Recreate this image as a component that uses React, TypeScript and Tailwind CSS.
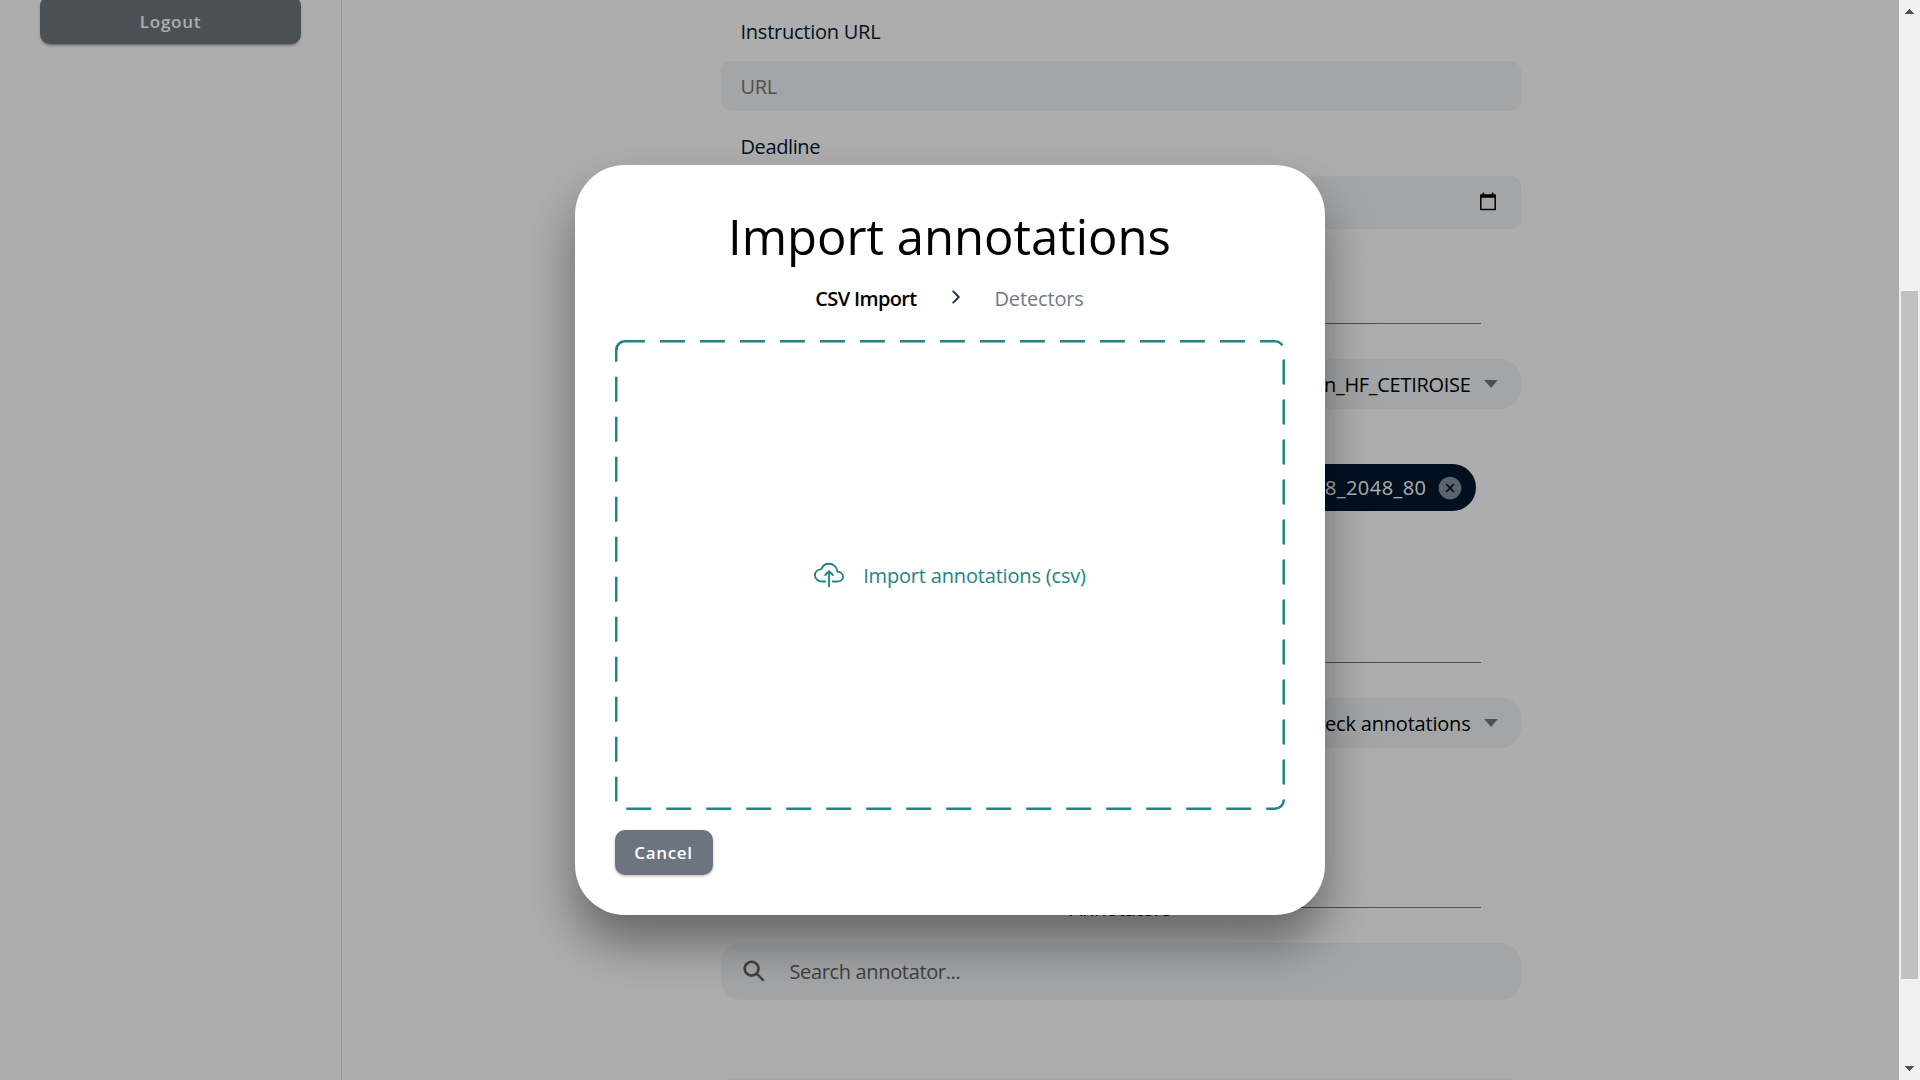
import React from 'react';
import {
  IoCaretDownSharp,
  IoChevronForwardOutline,
  IoCloseCircle,
  IoCloudUploadOutline,
  IoSearchSharp,
} from 'react-icons/io5';

function Divider({ title }: { title?: string }) {
  return (
    <div className="mx-10 flex h-[30px] items-center">
      <span className="h-px flex-1 bg-[#6c757d]" />
      {title && <span className="px-4 pt-[3px] text-[20px] leading-[30px] tracking-[-0.3px] text-black">{title}</span>}
      {title && <span className="h-px flex-1 bg-[#6c757d]" />}
    </div>
  );
}

function Select({ value, spacing }: { value: string; spacing: string }) {
  return (
    <div className="flex h-[50px] items-center justify-end rounded-[20px] bg-[#f1f4f7] pr-[21px]">
      <span className={`pt-0.5 text-[20px] leading-[30px] text-black ${spacing}`}>{value}</span>
      <IoCaretDownSharp className="ml-[11px] size-[18px] text-[#6b7789]" />
    </div>
  );
}

function CalendarIcon() {
  return (
    <svg className="-mt-0.5 h-[19px] w-4" viewBox="0 0 16 19" fill="none">
      <path d="M.8 3.2h14.4v14.2H.8z" stroke="black" strokeWidth="1.5" strokeLinejoin="round" />
      <path d="M.5 2.6h15v3.2H.5zM2.6.6h1.6v2.6H2.6zM11.8.6h1.6v2.6h-1.6z" fill="black" />
    </svg>
  );
}

function Sidebar() {
  return (
    <aside className="h-full w-[342px] shrink-0 border-r border-[#dadada] px-10">
      <button className="-mt-1 block h-12 w-full rounded-[10px] bg-[#6e767f] pt-1 text-[17px] font-semibold tracking-[0.75px] text-white shadow-[0_3px_2px_-2px_rgba(0,0,0,0.25),0_2px_3px_rgba(0,0,0,0.2)]">
        Logout
      </button>
    </aside>
  );
}

function CampaignForm() {
  return (
    <main className="flex flex-1 justify-center">
      <form className="w-[800px] text-[20px] text-[#001a35]">
        <label className="mt-[17px] block px-5 leading-[30px] tracking-[-0.25px]">Instruction URL</label>
        <div className="mt-[14px] flex h-[50px] items-center rounded-[10px] bg-[#f1f4f7] px-5 pt-0.5 leading-[30px] tracking-[-0.3px] text-[#757575]">
          URL
        </div>
        <label className="mt-[21px] block px-5 leading-[30px] tracking-[-0.4px]">Deadline</label>
        <div className="mt-[14px] flex h-[53px] items-center justify-end rounded-[10px] bg-[#f1f4f7] pr-[25px]">
          <CalendarIcon />
        </div>
        <div className="mt-[79px]">
          <Divider />
        </div>
        <div className="mt-[21px]">
          <Select value="Sample_campaign_HF_CETIROISE" spacing="tracking-[-0.3px]" />
        </div>
        <div className="mt-[55px] flex justify-end pr-[45px]">
          <div className="flex h-[47px] items-center rounded-full bg-[#001832] pl-5 pr-[12px] text-white">
            <span className="leading-[30px] tracking-[0.45px]">4096_2048_2048_80</span>
            <IoCloseCircle className="ml-[9px] size-7 text-[#87929e]" />
          </div>
        </div>
        <div className="mt-[136px]">
          <Divider />
        </div>
        <div className="mt-[21px]">
          <Select value="Check annotations" spacing="tracking-[-0.2px]" />
        </div>
        <div className="mt-[144px]">
          <Divider title="Annotators" />
        </div>
        <div className="mt-[21px] flex h-[57px] items-center rounded-[20px] bg-[#f1f4f7] pl-5 text-[#606060]">
          <IoSearchSharp className="-mt-0.5 size-[26px]" />
          <span className="ml-[23px] leading-[30px] tracking-[-0.35px]">Search annotator...</span>
        </div>
        <div className="mx-[2px] mt-[81px] h-10 rounded-[10px] shadow-[0_0_3px_rgba(0,0,0,0.35)]" />
      </form>
    </main>
  );
}

function ImportModal() {
  return (
    <div className="flex h-[750px] w-[750px] flex-col rounded-[50px] bg-white px-10 pb-10 pt-10 shadow-[0_28px_48px_rgba(0,0,0,0.4)]">
      <h1 className="-mt-px text-center text-[49px] leading-[64px] tracking-[0px] text-black">Import annotations</h1>
      <div className="mt-4 flex h-[30px] items-center justify-center text-[20px] leading-[30px]">
        <span className="font-semibold tracking-[-0.65px] text-black">CSV Import</span>
        <IoChevronForwardOutline className="ml-[29px] mr-[29px] -mt-1 size-5 text-[#222f3e]" />
        <span className="tracking-[-0.15px] text-[#6c7a8b]">Detectors</span>
      </div>
      <div className="mt-[26px] grid h-[470px] w-[670px]">
        <svg
          className="col-start-1 row-start-1 h-[470px] w-[670px] rounded-[10px]"
          viewBox="0 0 670 470"
          fill="none"
          stroke="#218583"
          strokeWidth="5"
        >
          <rect width="670" height="470" rx="10" strokeDasharray="25 15" strokeDashoffset="5" />
          <path d="M0 10A10 10 0 0 1 10 0" />
        </svg>
        <div className="col-start-1 row-start-1 flex items-center justify-center pl-px text-[#218583]">
          <IoCloudUploadOutline className="size-[30px]" />
          <span className="ml-[19px] pt-0.5 text-[20px] leading-[30px] tracking-[-0.18px]">Import annotations (csv)</span>
        </div>
      </div>
      <button className="mt-5 h-[45px] w-[98px] shrink-0 rounded-[10px] bg-[#6c757f] text-[17px] font-semibold tracking-[0.7px] text-white shadow-[0_1px_3px_rgba(0,0,0,0.3)]">
        Cancel
      </button>
    </div>
  );
}

function Scrollbar() {
  return (
    <div className="flex h-full w-[21px] shrink-0 flex-col items-center bg-[#f0f0f0]">
      <svg className="mt-[9px] h-[5px] w-[9px]" viewBox="0 0 9 5" shapeRendering="crispEdges">
        <path d="M0 5L4.5 0L9 5z" fill="#505050" />
      </svg>
      <div className="mt-[277px] h-[688px] w-[17px] bg-[#c1c1c1]" />
      <svg className="mt-[87px] h-[5px] w-[9px]" viewBox="0 0 9 5" shapeRendering="crispEdges">
        <path d="M0 0L4.5 5L9 0z" fill="#505050" />
      </svg>
    </div>
  );
}

export default function App() {
  return (
    <div className="flex h-[1080px] w-[1920px] overflow-hidden bg-white font-['Open_Sans',sans-serif]">
      <div className="relative flex h-full flex-1 overflow-hidden">
        <Sidebar />
        <CampaignForm />
        <div className="absolute inset-0 flex items-center justify-center bg-black/[0.32]">
          <ImportModal />
        </div>
      </div>
      <Scrollbar />
    </div>
  );
}
